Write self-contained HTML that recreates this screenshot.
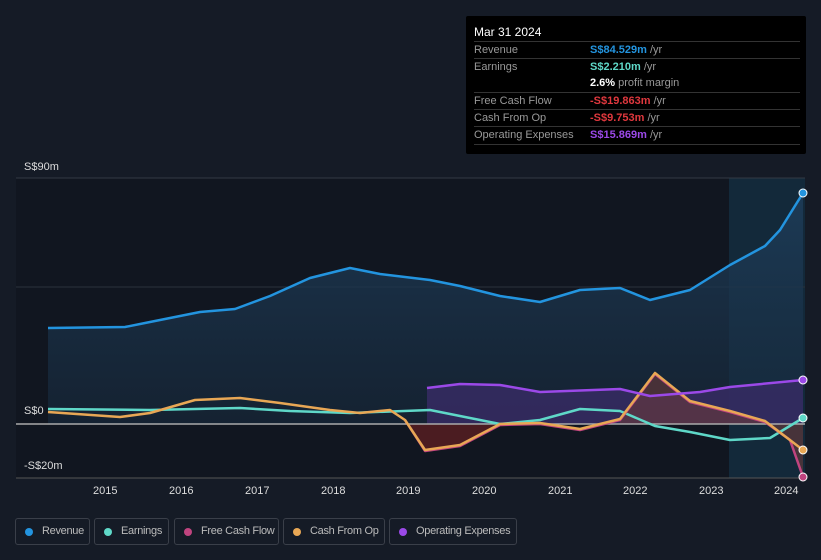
<!DOCTYPE html><html><head><style>
body{margin:0;width:821px;height:560px;background:#151b26;font-family:"Liberation Sans",sans-serif;overflow:hidden;position:relative}
.tt{position:absolute;left:466px;top:16px;width:340px;height:138px;background:#000;border-radius:2px;color:#999;font-size:11px}
.tt .h{color:#fff;font-size:12px;position:absolute;left:8px;top:9px}
.row{position:absolute;left:8px;width:326px;height:17px;line-height:17px;border-top:1px solid #333}
.row span.v{position:absolute;left:116px}
.leg{position:absolute;top:518px;height:27px;border:1px solid #3a3f49;border-radius:3px;color:#bbb;font-size:11px;letter-spacing:-0.3px;line-height:25px;box-sizing:border-box;padding-left:26px;white-space:nowrap}
.leg i{position:absolute;left:9px;top:9px;width:8px;height:8px;border-radius:50%}
.ax{position:absolute;color:#ddd;font-size:11px}
</style></head><body>
<svg width="821" height="560" style="position:absolute;left:0;top:0">
<defs><linearGradient id="rg" x1="0" y1="0" x2="0" y2="1"><stop offset="0" stop-color="#1e3d5a" stop-opacity=".85"/><stop offset="1" stop-color="#172a3d" stop-opacity=".6"/></linearGradient></defs>
<rect x="16" y="178" width="789" height="300" fill="#111620"/>
<rect x="729" y="178" width="76" height="300" fill="#13293a"/>
<line x1="16" y1="178" x2="805" y2="178" stroke="#333a44"/>
<line x1="16" y1="287" x2="805" y2="287" stroke="#2a313b"/>
<path d="M48,328 L125,327 150,322 200,312 235,309 270,296 310,278 350,268 380,274 430,280 460,286 500,296 540,302 580,290 620,288 650,300 690,290 730,265 765,246 780,230 803,193 L803,424 48,424Z" fill="url(#rg)"/>
<path d="M427,388 L460,384 500,385 540,392 620,389 650,396 700,392 730,387 803,380 L803,424 427,424Z" fill="#3b2c6a" opacity=".75"/>
<path d="M405,420 L425,451 460,446 500,425 L405,424Z" fill="#5a1e22" opacity=".8"/>
<path d="M620,420 L655,374 690,402 730,412 765,422 790,440 803,477 L803,424 620,424Z" fill="#6a3a3a" opacity=".6"/>
<line x1="16" y1="424" x2="805" y2="424" stroke="#aaa" stroke-width="1.5"/>
<line x1="16" y1="478" x2="805" y2="478" stroke="#555"/>
<g fill="none" stroke-width="2.5" stroke-linejoin="round">
<path d="M48,328 L125,327 150,322 200,312 235,309 270,296 310,278 350,268 380,274 430,280 460,286 500,296 540,302 580,290 620,288 650,300 690,290 730,265 765,246 780,230 803,193" stroke="#2394df"/>
<path d="M48,409 L150,410 240,408 290,411 350,413 430,410 480,420 500,424 540,420 580,409 620,411 655,426 690,432 730,440 770,438 803,418" stroke="#5fd8c8"/>
<path d="M405,420 L425,451 460,446 500,425 540,424 580,430 620,420 655,374 690,402 730,412 765,422 790,440 803,477" stroke="#c0447f"/>
<path d="M48,412 L120,417 150,413 195,400 240,398 280,403 330,410 360,413 390,410 405,420 425,450 460,445 500,424 540,423 580,429 620,419 655,373 690,401 730,411 765,421 803,450" stroke="#e8a755"/>
<path d="M427,388 L460,384 500,385 540,392 620,389 650,396 700,392 730,387 803,380" stroke="#9b49e8"/>
</g>
<circle cx="803" cy="193" r="4" fill="#2394df" stroke="#fff"/>
<circle cx="803" cy="380" r="4" fill="#9b49e8" stroke="#fff"/>
<circle cx="803" cy="418" r="4" fill="#5fd8c8" stroke="#fff"/>
<circle cx="803" cy="450" r="4" fill="#e8a755" stroke="#fff"/>
<circle cx="803" cy="477" r="4" fill="#c0447f" stroke="#fff"/>
</svg>
<div class="ax" style="left:24px;top:161px">S$90m</div>
<div class="ax" style="left:24px;top:405px">S$0</div>
<div class="ax" style="left:24px;top:460px">-S$20m</div>
<div class="ax" style="left:93px;top:485px">2015</div>
<div class="ax" style="left:169px;top:485px">2016</div>
<div class="ax" style="left:245px;top:485px">2017</div>
<div class="ax" style="left:321px;top:485px">2018</div>
<div class="ax" style="left:396px;top:485px">2019</div>
<div class="ax" style="left:472px;top:485px">2020</div>
<div class="ax" style="left:548px;top:485px">2021</div>
<div class="ax" style="left:623px;top:485px">2022</div>
<div class="ax" style="left:699px;top:485px">2023</div>
<div class="ax" style="left:774px;top:485px">2024</div>
<div class="tt"><div class="h">Mar 31 2024</div>
<div class="row" style="top:25px">Revenue<span class="v" style="color:#2394df;font-weight:bold">S$84.529m <span style="color:#999;font-weight:normal">/yr</span></span></div>
<div class="row" style="top:42px">Earnings<span class="v" style="color:#5fd8c8;font-weight:bold">S$2.210m <span style="color:#999;font-weight:normal">/yr</span></span></div>
<div class="row" style="top:59px;border-top:none"><span class="v" style="color:#fff;font-weight:bold">2.6% <span style="color:#999;font-weight:normal">profit margin</span></span></div>
<div class="row" style="top:76px">Free Cash Flow<span class="v" style="color:#e0383e;font-weight:bold">-S$19.863m <span style="color:#999;font-weight:normal">/yr</span></span></div>
<div class="row" style="top:93px">Cash From Op<span class="v" style="color:#e0383e;font-weight:bold">-S$9.753m <span style="color:#999;font-weight:normal">/yr</span></span></div>
<div class="row" style="top:110px">Operating Expenses<span class="v" style="color:#9b49e8;font-weight:bold">S$15.869m <span style="color:#999;font-weight:normal">/yr</span></span></div>
<div class="row" style="top:128px;height:0"></div>
</div>
<div class="leg" style="left:15px;width:75px"><i style="background:#2394df"></i>Revenue</div>
<div class="leg" style="left:94px;width:75px"><i style="background:#5fd8c8"></i>Earnings</div>
<div class="leg" style="left:174px;width:105px"><i style="background:#c0447f"></i>Free Cash Flow</div>
<div class="leg" style="left:283px;width:102px"><i style="background:#e8a755"></i>Cash From Op</div>
<div class="leg" style="left:389px;width:128px"><i style="background:#9b49e8"></i>Operating Expenses</div>
</body></html>
